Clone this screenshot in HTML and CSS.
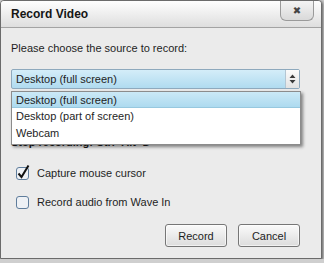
FILE: index.html
```html
<!DOCTYPE html>
<html lang="en">
<head>
  <meta charset="UTF-8" />
  <title>Record Video</title>
  <link rel="stylesheet" href="styles.css">
</head>
<body>
  <div class="dialog">
    <div class="titlebar">
      <span class="title">Record Video</span>
      <button class="close">&#x2716;</button>
    </div>

    <div class="content">
      <p class="prompt">Please choose the source to record:</p>

      <div class="picker">
        <div class="select">
          <span class="value">Desktop (full screen)</span>
          <span class="spin">
            <svg width="7" height="10" viewBox="0 0 7 10">
              <path d="M3.5 0.5 L6.5 4 L0.5 4 Z M3.5 9.5 L6.5 6 L0.5 6 Z" fill="#3a3a3a" />
            </svg>
          </span>
        </div>
        <ul class="options">
          <li class="active">Desktop (full screen)</li>
          <li>Desktop (part of screen)</li>
          <li>Webcam</li>
        </ul>
      </div>

      <p class="hotkey">Stop recording: Ctrl+Alt+D</p>

      <div class="checks">
        <label class="check">
          <svg width="16" height="16" viewBox="0 0 16 16">
            <rect x="1.5" y="2.5" width="12" height="12" rx="2.5" fill="#eef1f5" stroke="#5f7d9c" />
            <path d="M3.5 8.5 L6.5 12 L13.5 0.5" fill="none" stroke="#111" stroke-width="2" />
          </svg>
          <span>Capture mouse cursor</span>
        </label>
        <label class="check">
          <svg width="16" height="16" viewBox="0 0 16 16">
            <rect x="1.5" y="2.5" width="12" height="12" rx="2.5" fill="#eef1f5" stroke="#5f7d9c" />
          </svg>
          <span>Record audio from Wave In</span>
        </label>
      </div>

      <div class="actions">
        <button class="btn">Record</button>
        <button class="btn">Cancel</button>
      </div>
    </div>
  </div>
</body>
</html>
```

FILE: styles.css
```css
* {
  box-sizing: border-box;
}

body {
  margin: 0;
  background-color: #cfcfcf;
  font-family: 'Liberation Sans', Arial, sans-serif;
  font-size: 11px;
  color: #1e1e1e;
}

.dialog {
  width: 322px;
  height: 259px;
  border: 1px solid #6b6b6b;
  border-radius: 4px 4px 0 0;
  background-color: #ebebeb;
  box-shadow: 1px 1px 3px rgba(0,0,0,0.55);
  display: flex;
  flex-direction: column;
}

.titlebar {
  height: 27px;
  border-bottom: 1px solid #a3a3a3;
  border-radius: 3px 3px 0 0;
  background: linear-gradient(#fefefe, #dedede);
  display: flex;
  align-items: center;
  justify-content: space-between;
  padding: 0 7px 0 10px;
}

.title {
  font-size: 12px;
  font-weight: bold;
  color: #151515;
}

.close {
  align-self: flex-start;
  width: 34px;
  height: 20px;
  margin: 0;
  padding: 0;
  border: 1px solid #9a9a9a;
  border-top: none;
  border-radius: 0 0 6px 6px;
  background: linear-gradient(#f4f4f4, #d9d9d9);
  color: #454545;
  font-size: 10px;
  line-height: 18px;
  font-family: 'DejaVu Sans', sans-serif;
}

.content {
  flex: 1;
  padding: 0 21px 0 10px;
}

.prompt {
  margin: 14px 0 0;
  line-height: 13px;
}

.picker {
  position: relative;
  margin-top: 14px;
}

.select {
  height: 20px;
  border: 1px solid #8ea9bd;
  border-radius: 2px;
  background: linear-gradient(#d4edf9, #b0dbf0);
  display: flex;
  align-items: center;
}

.select .value {
  flex: 1;
  padding-left: 4px;
  line-height: 18px;
}

.spin {
  width: 14px;
  height: 18px;
  border-left: 1px solid #b4c6d3;
  background: linear-gradient(#fbfbfb, #e2e2e2);
  display: flex;
  align-items: center;
  justify-content: center;
}

.options {
  position: absolute;
  top: 22px;
  left: 0;
  width: 290px;
  margin: 0;
  padding: 0 0 2px;
  list-style: none;
  background-color: #fff;
  border: 1px solid #8c8c8c;
  box-shadow: 2px 2px 3px rgba(0,0,0,0.45);
  z-index: 2;
}

.options li {
  height: 17px;
  line-height: 17px;
  padding-left: 4px;
}

.options li.active {
  height: 16px;
  line-height: 16px;
  background: linear-gradient(#cbe9f7, #addaef);
  border-bottom: 1px solid #97c8df;
}

.hotkey {
  margin: 45px 0 0;
  line-height: 16px;
  font-weight: bold;
}

.checks {
  margin-top: 14px;
  display: flex;
  flex-direction: column;
  gap: 11px;
}

.check {
  height: 18px;
  display: flex;
  align-items: center;
  gap: 6px;
  padding-left: 4px;
}

.actions {
  margin-top: 13px;
  display: flex;
  justify-content: flex-end;
  gap: 11px;
}

.btn {
  width: 62px;
  height: 23px;
  margin: 0;
  padding: 0;
  border: 1px solid #767676;
  border-radius: 3px;
  background: linear-gradient(#fafafa, #dcdcdc);
  font-family: inherit;
  font-size: 11px;
  color: #1e1e1e;
  box-shadow: inset 0 0 0 1px rgba(255,255,255,0.6);
}
```
